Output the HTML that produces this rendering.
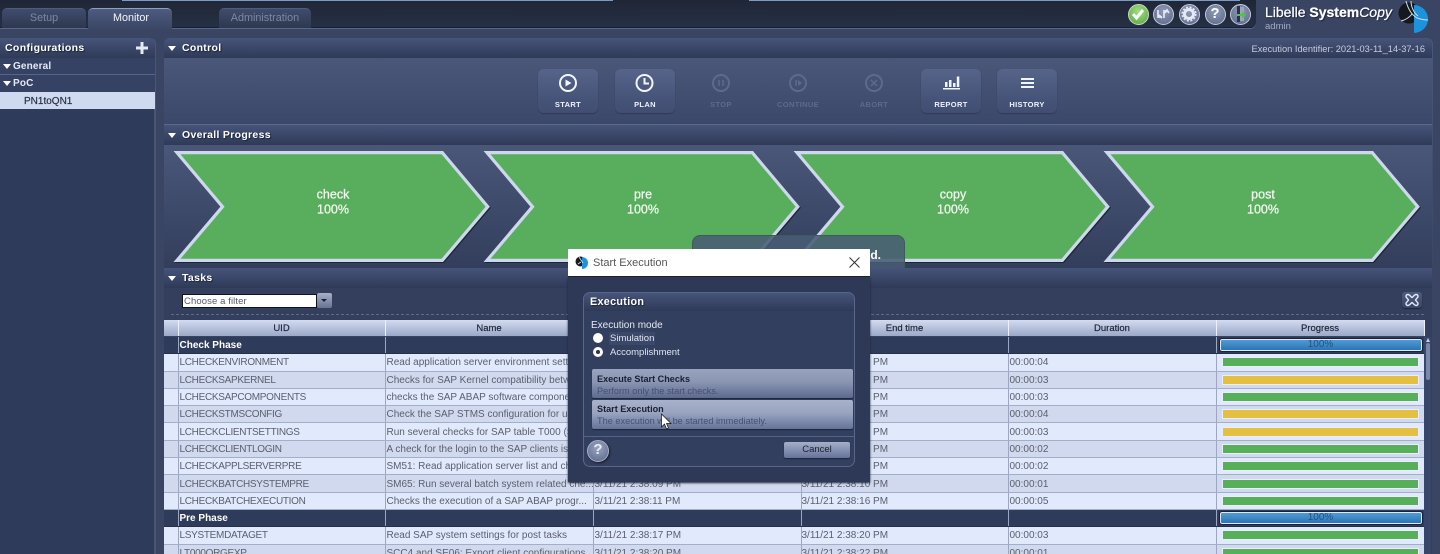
<!DOCTYPE html>
<html><head><meta charset="utf-8"><title>Libelle SystemCopy</title>
<style>
*{box-sizing:border-box}
html,body{margin:0;padding:0;width:1440px;height:554px;overflow:hidden;background:#3a4563}
body{font-family:"Liberation Sans",sans-serif;position:relative}
#w{position:absolute;left:0;top:0;width:1440px;height:554px;overflow:hidden;filter:blur(.35px)}
.a{position:absolute}
.tab{position:absolute;top:8px;height:20px;border-radius:5px 5px 0 0;background:linear-gradient(#3f4c6c,#2d3750);color:#7c89a2;font-size:10.8px;text-align:center;line-height:19px;border-top:1px solid #4f5c7c}
.hd{position:absolute;background:linear-gradient(#46547a,#2f3a58);color:#fff;font-weight:bold;font-size:10.5px;letter-spacing:.3px;text-shadow:1px 1px 1px #1a2236}
.tri{position:absolute;width:0;height:0;border-left:4.5px solid transparent;border-right:4.5px solid transparent;border-top:5px solid #fff}
.btn{position:absolute;top:69px;width:60px;height:44px;border-radius:6px;background:linear-gradient(#56648a,#465378 70%,#414e72);box-shadow:0 1px 1px #2f3a55}
.lb{position:absolute;top:100px;width:80px;text-align:center;font-size:7.5px;font-weight:bold;letter-spacing:.35px;color:#eef2fb}
.off{color:#5d6a8b}
table{position:absolute;left:164px;top:320px;width:1260px;border-collapse:collapse;table-layout:fixed;font-size:10px;color:#5a606e}
th{height:16.5px;padding:0;background:linear-gradient(#d3dbf0,#9ba8c7);color:#1f2638;font-size:9.5px;font-weight:normal;-webkit-text-stroke:.2px #1f2638;border-right:1px solid #eef;border-bottom:1px solid #39445f}
td{height:17.3px;padding:2px 0 0 1px;white-space:nowrap;overflow:hidden;border-right:1px solid #9aa6c2;border-bottom:1px solid #a3aec8;line-height:14px;vertical-align:middle}
td:nth-child(2){letter-spacing:-.3px}
td:nth-child(5){padding-left:0}
tr.o td{background:#e1e9fc}
tr.e td{background:#d0d9ee}
tr.p td{background:#2f3b5a;color:#fff;font-weight:bold;border-bottom:1px solid #26304a;font-size:10px;letter-spacing:0}
.bar{display:block;margin:0 5px 2px 4px;height:10px;background:#58af5a;border:1px solid #e8eefc}
.y{background:#e3bf42}
.pb{display:block;margin:0 2px 2px 2px;height:12px;background:linear-gradient(#4e9bd6,#2c74b4);border:1px solid #dfe8fa;border-radius:2px;outline:1px solid #1a2236;color:#23527f;text-align:center;font-size:10px;font-weight:normal;line-height:10px}
.ic{position:absolute;top:4px;width:21px;height:21px;border-radius:50%;background:radial-gradient(circle at 50% 35%,#8e9ab8,#5b6788);border:1.5px solid #c4cad8}
</style></head><body><div id="w">

<!-- top bar -->
<div class="a" style="left:0;top:0;width:1256px;height:28px;background:linear-gradient(#1f2637,#263044);border-radius:0 0 6px 0;border-bottom:1px solid #14203a;box-shadow:0 1px 0 #5a6785"></div>
<div class="a" style="left:122px;top:0;width:491px;height:1px;background:#7a9cc4"></div>
<div class="a" style="left:749px;top:0;width:491px;height:1px;background:#7a9cc4"></div>
<div class="tab" style="left:2px;width:84px">Setup</div>
<div class="tab" style="left:88px;width:84px;height:22px;top:8px;background:linear-gradient(#4d5b80,#3a4563);color:#f2f5fb;border-top:1px solid #8fa0bf;padding-left:2px">Monitor</div>
<div class="tab" style="left:219px;width:92px">Administration</div>

<!-- status icons -->
<div class="ic" style="left:1127.5px;background:radial-gradient(circle at 50% 35%,#a4dc84,#54a63e);border-color:#c8d8c0">
<svg width="18" height="18" viewBox="0 0 18 18"><path d="M4 9l3.5 4L14 5" fill="none" stroke="#f4fbf0" stroke-width="3"/></svg></div>
<div class="ic" style="left:1152.5px"><svg width="18" height="18" viewBox="0 0 18 18"><path d="M4 5v7h4M5 10l3 3M10 13V6h3.5M11 8l2-3 2 3" fill="none" stroke="#e4e9f4" stroke-width="1.7"/></svg></div>
<div class="ic" style="left:1178.5px"><svg width="18" height="18" viewBox="0 0 18 18"><circle cx="9" cy="9" r="4.5" fill="none" stroke="#e4e9f4" stroke-width="3"/><circle cx="9" cy="9" r="6.8" fill="none" stroke="#e4e9f4" stroke-width="1.6" stroke-dasharray="2 1.6"/></svg></div>
<div class="ic" style="left:1204.5px;color:#fff;font-weight:bold;font-size:15px;text-align:center;line-height:18px">?</div>
<div class="ic" style="left:1229.5px"><svg width="18" height="18" viewBox="0 0 18 18"><rect x="6" y="1" width="3" height="16" fill="#2b3348"/><rect x="9" y="2" width="4" height="14" fill="#9aa5bf"/><path d="M6 9h5V6.500l4 3.500-4 3.500V11H6z" fill="#58c04a"/></svg></div>

<!-- logo -->
<div class="a" style="left:1265px;top:4px;color:#fff;font-size:14px;line-height:17px;white-space:nowrap;text-shadow:1px 1px 1px #1a2236;-webkit-text-stroke:.25px #fff">Libelle <b>System</b><i>Copy</i></div>
<div class="a" style="left:1265px;top:21px;color:#a0abc2;font-size:9.5px;line-height:12px">admin</div>
<svg class="a" style="left:1398px;top:0" width="34" height="36" viewBox="0 0 34 36"><circle cx="11" cy="13" r="10.500" fill="#15181f"/><path d="M16 5a14 14 0 0 1 0 28z" fill="#1c93dc"/><path d="M8 1c2 8 6 14 11 17M13 1c0 6 3 12 7 15M3 21c4-1 8-3 11-7M19 18c3 1 7 2 11 2" fill="none" stroke="#d8dde6" stroke-width="1"/></svg>

<!-- sidebar -->
<div class="a" style="left:0;top:38px;width:156px;height:516px;background:#2f3b5a;border-right:2px solid #4a5676;border-radius:0 6px 0 0"></div>
<div class="hd" style="left:0;top:38px;width:155px;height:20px;line-height:20.500px;padding-left:5px;border-radius:0 6px 0 0;font-size:10.500px;letter-spacing:.35px">Configurations</div>
<svg class="a" style="left:136px;top:42px" width="12" height="12"><path d="M6 0v12M0 6h12" stroke="#e4e9f4" stroke-width="3"/></svg>
<div class="a" style="left:0;top:58px;width:155px;height:17px;background:#364263;border-bottom:1px solid #57638a"></div>
<div class="a" style="left:0;top:75px;width:155px;height:17px;background:#364263"></div>
<div class="tri" style="left:3px;top:64px"></div><div class="a" style="left:13px;top:60px;color:#e4e9f4;font-weight:bold;font-size:10px;letter-spacing:.15px;line-height:14px">General</div>
<div class="tri" style="left:3px;top:81px"></div><div class="a" style="left:13px;top:77px;color:#e4e9f4;font-weight:bold;font-size:10px;letter-spacing:.15px;line-height:14px">PoC</div>
<div class="a" style="left:0;top:92px;width:155px;height:17px;background:#cfdaf1;color:#2a3245;font-size:10px;letter-spacing:0;padding-left:24px;line-height:19px;-webkit-text-stroke:.2px #2a3245">PN1toQN1</div>

<!-- control panel -->
<div class="a" style="left:164px;top:38px;width:1269px;height:230px;background:linear-gradient(#4b5879,#3b4767);border-radius:6px 6px 0 0"></div>
<div class="a" style="left:164px;top:58px;width:1268px;height:66px;background:linear-gradient(#4a5779,#3c4869);"></div>
<div class="hd" style="left:164px;top:38px;width:1268px;height:20px;line-height:21px;padding-left:18px;border-radius:6px 6px 0 0">Control</div>
<div class="tri" style="left:168px;top:46px"></div>
<div class="a" style="right:15px;top:42.500px;color:#c4ccdd;font-size:9.300px;line-height:13px">Execution Identifier: 2021-03-11_14-37-16</div>

<div class="btn" style="left:538px"></div><div class="btn" style="left:615px"></div>
<div class="btn" style="left:921px"></div><div class="btn" style="left:997px"></div>
<svg class="a" style="left:530px;top:70px" width="540" height="28" viewBox="530 70 540 28">
<g fill="none" stroke="#f2f5fb" stroke-width="2"><circle cx="568" cy="83" r="8"/><circle cx="644.500" cy="83" r="8"/><path d="M644.500 78v5.500h4.500"/></g>
<path d="M565.500 79.500l6 3.500-6 3.500z" fill="#f2f5fb"/>
<g fill="none" stroke="#5d6a8b" stroke-width="2"><circle cx="721" cy="83" r="8"/><circle cx="798" cy="83" r="8"/><circle cx="874" cy="83" r="8"/><path d="M719 80v6M723 80v6M796 80v6M871 80l6 6M877 80l-6 6" stroke-width="1.500"/></g>
<path d="M798 80l4 3-4 3z" fill="#5d6a8b"/>
<path d="M943 88h17v1.500h-17z" fill="#f2f5fb"/><path d="M945 82h2.500v5H945zM949 80h2.500v7H949zM953 83h2.500v4H953zM956.800 76.500h2.500V87h-2.500z" fill="#f2f5fb"/>
<path d="M1021 78h13v2h-13zM1021 82h13v2h-13zM1021 86h13v2h-13z" fill="#f2f5fb"/>
</svg>
<div class="lb" style="left:528px">START</div>
<div class="lb" style="left:605px">PLAN</div>
<div class="lb off" style="left:681px">STOP</div>
<div class="lb off" style="left:758px">CONTINUE</div>
<div class="lb off" style="left:834px">ABORT</div>
<div class="lb" style="left:911px">REPORT</div>
<div class="lb" style="left:987px">HISTORY</div>

<!-- overall -->
<div class="a" style="left:164px;top:124px;width:1268px;height:1px;background:#5b6889"></div>
<div class="hd" style="left:164px;top:125px;width:1268px;height:20px;line-height:20px;padding-left:18px">Overall Progress</div>
<div class="tri" style="left:168px;top:133px"></div>
<div class="a" style="left:164px;top:145px;width:1268px;height:123px;background:linear-gradient(#4a5779,#333e5c)"></div>
<svg class="a" style="left:164px;top:145px" width="1268" height="123" viewBox="164 145 1268 123" font-family="Liberation Sans" font-size="12.500" fill="#f4f8f2" text-anchor="middle">
<g fill="#58ae5c" stroke="#cdd8ec" stroke-width="3.200" style="filter:drop-shadow(1px 1px 0 #1c2438)">
<path id="c1" d="M177 152.600H442.300L487.800 206.700 442.300 260.400H177L222.500 206.700z"/>
<path d="M487 152.600H752.300L797.800 206.700 752.300 260.400H487L532.500 206.700z"/>
<path d="M797 152.600H1062.300L1107.800 206.700 1062.300 260.400H797L842.500 206.700z"/>
<path d="M1107 152.600H1372.300L1417.800 206.700 1372.300 260.400H1107L1152.500 206.700z"/>
</g>
<g stroke="#f4f8f2" stroke-width=".25">
<text x="333" y="198.500">check</text><text x="333" y="213.500">100%</text>
<text x="643" y="198.500">pre</text><text x="643" y="213.500">100%</text>
<text x="953" y="198.500">copy</text><text x="953" y="213.500">100%</text>
<text x="1263" y="198.500">post</text><text x="1263" y="213.500">100%</text>
</g>
</svg>
<div class="a" style="left:692px;top:235px;width:213px;height:33px;background:rgba(72,92,116,.88);border:1px solid #3f5a5c;border-bottom:0;border-radius:8px 8px 0 0;color:#fff;font-weight:bold;font-size:12px;text-align:right;padding:12px 23px 0 0;line-height:14px">d.</div>

<!-- tasks -->
<div class="hd" style="left:164px;top:268px;width:1268px;height:20px;line-height:21px;padding-left:18px">Tasks</div>
<div class="tri" style="left:168px;top:276px"></div>
<div class="a" style="left:164px;top:288px;width:1268px;height:266px;background:#333f5d"></div>
<div class="a" style="left:182px;top:294px;width:135px;height:14px;background:#fff;border:1px solid #10131c;color:#555a66;font-size:9.500px;letter-spacing:.1px;line-height:13px;padding-left:1px">Choose a filter</div>
<div class="a" style="left:317px;top:293px;width:15px;height:15px;background:linear-gradient(#a6b0c8,#667392);border-radius:2px"><div style="position:absolute;left:4px;top:6px;width:0;height:0;border-left:3.500px solid transparent;border-right:3.500px solid transparent;border-top:3.500px solid #1a2030"></div></div>
<div class="a" style="left:171px;top:314px;width:1253px;border-top:1px dashed #5e6b8b"></div>
<div class="a" style="left:1402px;top:292px;width:20px;height:16px;background:linear-gradient(#4e5c80,#3a4666);border-radius:3px;box-shadow:0 1px 1px #1c2438">
<svg width="20" height="16" viewBox="0 0 20 16"><path d="M6 2.500c1.500 0 3 2.500 4 3 1-.5 2.500-3 4-3 2 0 2.500 2 1.500 3l-2 2.500 2 2.500c1 1 .5 3-1.500 3-1.500 0-3-2.500-4-3-1 .5-2.500 3-4 3-2 0-2.500-2-1.500-3l2-2.500-2-2.500C3.500 4.500 4 2.500 6 2.500z" fill="none" stroke="#e4e9f4" stroke-width="1.400"/></svg></div>

<table>
<colgroup><col style="width:14px"><col style="width:207px"><col style="width:208px"><col style="width:208px"><col style="width:207px"><col style="width:208px"><col style="width:208px"></colgroup>
<tr><th></th><th>UID</th><th>Name</th><th>Start time</th><th>End time</th><th>Duration</th><th>Progress</th></tr>
<tr class="p"><td></td><td>Check Phase</td><td></td><td></td><td></td><td></td><td><span class="pb">100%</span></td></tr>
<tr class="o"><td></td><td>LCHECKENVIRONMENT</td><td>Read application server environment settings</td><td>3/11/21 2:37:58 PM</td><td>3/11/21 2:38:02 PM</td><td>00:00:04</td><td><span class="bar"></span></td></tr>
<tr class="e"><td></td><td>LCHECKSAPKERNEL</td><td>Checks for SAP Kernel compatibility between</td><td>3/11/21 2:38:02 PM</td><td>3/11/21 2:38:05 PM</td><td>00:00:03</td><td><span class="bar y"></span></td></tr>
<tr class="o"><td></td><td>LCHECKSAPCOMPONENTS</td><td>checks the SAP ABAP software components</td><td>3/11/21 2:38:05 PM</td><td>3/11/21 2:38:08 PM</td><td>00:00:03</td><td><span class="bar"></span></td></tr>
<tr class="e"><td></td><td>LCHECKSTMSCONFIG</td><td>Check the SAP STMS configuration for use</td><td>3/11/21 2:38:04 PM</td><td>3/11/21 2:38:08 PM</td><td>00:00:04</td><td><span class="bar y"></span></td></tr>
<tr class="o"><td></td><td>LCHECKCLIENTSETTINGS</td><td>Run several checks for SAP table T000 (SCC4)</td><td>3/11/21 2:38:04 PM</td><td>3/11/21 2:38:07 PM</td><td>00:00:03</td><td><span class="bar y"></span></td></tr>
<tr class="e"><td></td><td>LCHECKCLIENTLOGIN</td><td>A check for the login to the SAP clients is</td><td>3/11/21 2:38:05 PM</td><td>3/11/21 2:38:07 PM</td><td>00:00:02</td><td><span class="bar"></span></td></tr>
<tr class="o"><td></td><td>LCHECKAPPLSERVERPRE</td><td>SM51: Read application server list and check</td><td>3/11/21 2:38:07 PM</td><td>3/11/21 2:38:09 PM</td><td>00:00:02</td><td><span class="bar"></span></td></tr>
<tr class="e"><td></td><td>LCHECKBATCHSYSTEMPRE</td><td>SM65: Run several batch system related che...</td><td>3/11/21 2:38:09 PM</td><td>3/11/21 2:38:10 PM</td><td>00:00:01</td><td><span class="bar"></span></td></tr>
<tr class="o"><td></td><td>LCHECKBATCHEXECUTION</td><td>Checks the execution of a SAP ABAP progr...</td><td>3/11/21 2:38:11 PM</td><td>3/11/21 2:38:16 PM</td><td>00:00:05</td><td><span class="bar"></span></td></tr>
<tr class="p"><td></td><td>Pre Phase</td><td></td><td></td><td></td><td></td><td><span class="pb">100%</span></td></tr>
<tr class="o"><td></td><td>LSYSTEMDATAGET</td><td>Read SAP system settings for post tasks</td><td>3/11/21 2:38:17 PM</td><td>3/11/21 2:38:20 PM</td><td>00:00:03</td><td><span class="bar"></span></td></tr>
<tr class="e"><td></td><td>LT000ORGEXP</td><td>SCC4 and SE06: Export client configurations</td><td>3/11/21 2:38:20 PM</td><td>3/11/21 2:38:22 PM</td><td>00:00:01</td><td><span class="bar"></span></td></tr>
</table>
<div class="a" style="left:1424px;top:337px;width:7px;height:217px;background:#39456a"></div>
<div class="a" style="left:1426px;top:343px;width:4px;height:37px;background:#7b88a8;border-radius:2px"></div>
<div class="a" style="left:1425.500px;top:338px;width:0;height:0;border-left:2.500px solid transparent;border-right:2.500px solid transparent;border-bottom:4px solid #c8d0e2"></div>

<!-- dialog -->
<div class="a" style="left:568px;top:277px;width:302px;height:205px;background:#2e3957;box-shadow:0 1px 2px #1a2236"></div>
<div class="a" style="left:568px;top:249px;width:302px;height:28px;background:#fff;color:#555;font-size:11px;line-height:29px;padding-left:25px;border-bottom:1px solid #222">Start Execution</div>
<svg class="a" style="left:575px;top:255px" width="15" height="15" viewBox="0 0 15 15"><circle cx="5.500" cy="6.500" r="5" fill="#1a1d26"/><path d="M7 2a6 6 0 0 1 0 12z" fill="#1c93dc"/><path d="M4 2l4 6M3 9l3-2" stroke="#dde" stroke-width=".8"/></svg>
<svg class="a" style="left:849px;top:257px" width="11" height="11"><path d="M.5.500l10 10M10.500.500l-10 10" stroke="#333" stroke-width="1"/></svg>

<div class="a" style="left:583px;top:292px;width:272px;height:175px;background:#333f5e;border:1px solid #59668a;border-radius:7px"></div>
<div class="a" style="left:584px;top:293px;width:270px;height:18px;background:linear-gradient(#46547a,#2f3a58);border-radius:6px 6px 0 0;color:#fff;font-weight:bold;font-size:10.800px;line-height:18.500px;padding-left:6px;letter-spacing:.3px;text-shadow:1px 1px 1px #1a2236">Execution</div>
<div class="a" style="left:591px;top:319px;color:#e4e9f4;font-size:10px;line-height:13px">Execution mode</div>
<div class="a" style="left:593px;top:332.500px;width:10px;height:10px;border-radius:50%;background:#fff"></div>
<div class="a" style="left:593px;top:346.500px;width:10px;height:10px;border-radius:50%;background:#fff"><div style="position:absolute;left:3px;top:3px;width:4px;height:4px;border-radius:50%;background:#2a3348"></div></div>
<div class="a" style="left:609px;top:331.500px;color:#dfe5f2;font-size:9.500px;line-height:13px;background:#3c4868;padding:0 1px">Simulation</div>
<div class="a" style="left:610px;top:345.500px;color:#dfe5f2;font-size:9.500px;line-height:13px">Accomplishment</div>

<div class="a" style="left:592px;top:369px;width:261px;height:29px;background:linear-gradient(#98a3bf,#8a95b3 45%,#5d6a8e);border-radius:2px;box-shadow:0 1px 1px #1c2438">
<div style="position:absolute;left:5px;top:3.500px;font-size:9.100px;font-weight:bold;color:#1a2030;line-height:13px;white-space:nowrap">Execute Start Checks</div>
<div style="position:absolute;left:5px;top:15.500px;font-size:9.200px;color:#475070;line-height:13px;white-space:nowrap">Perform only the start checks.</div></div>
<div class="a" style="left:592px;top:400px;width:261px;height:29px;background:linear-gradient(#a8b2cb,#98a3bf 45%,#66739a);border-radius:2px;box-shadow:0 1px 1px #1c2438">
<div style="position:absolute;left:5px;top:2.500px;font-size:9.100px;font-weight:bold;color:#1a2030;line-height:13px;white-space:nowrap">Start Execution</div>
<div style="position:absolute;left:5px;top:15px;font-size:9.200px;color:#475070;line-height:13px;white-space:nowrap">The execution will be started immediately.</div></div>
<svg class="a" style="left:660px;top:413px" width="12" height="18" viewBox="0 0 12 18"><path d="M1.500 1v13l3-3 2 5 2-1-2-4.500h4.500z" fill="#fff" stroke="#111" stroke-width=".7"/></svg>

<div class="a" style="left:584px;top:436px;width:270px;height:1px;background:#55628a"></div>
<div class="a" style="left:587px;top:440px;width:22px;height:22px;border-radius:50%;background:radial-gradient(circle at 50% 35%,#98a4c0,#5b6788);border:1.500px solid #a6afc4;color:#e8ecf4;font-weight:bold;font-size:15px;line-height:18px;text-align:center;box-shadow:1px 1px 2px #141a2a">?</div>
<div class="a" style="left:784px;top:442px;width:66px;height:16px;background:linear-gradient(#a5afc8,#66729a);border-radius:2px;color:#1a2030;font-size:9.500px;line-height:16.500px;text-align:center;box-shadow:0 1px 1px #1c2438">Cancel</div>

</div></body></html>
